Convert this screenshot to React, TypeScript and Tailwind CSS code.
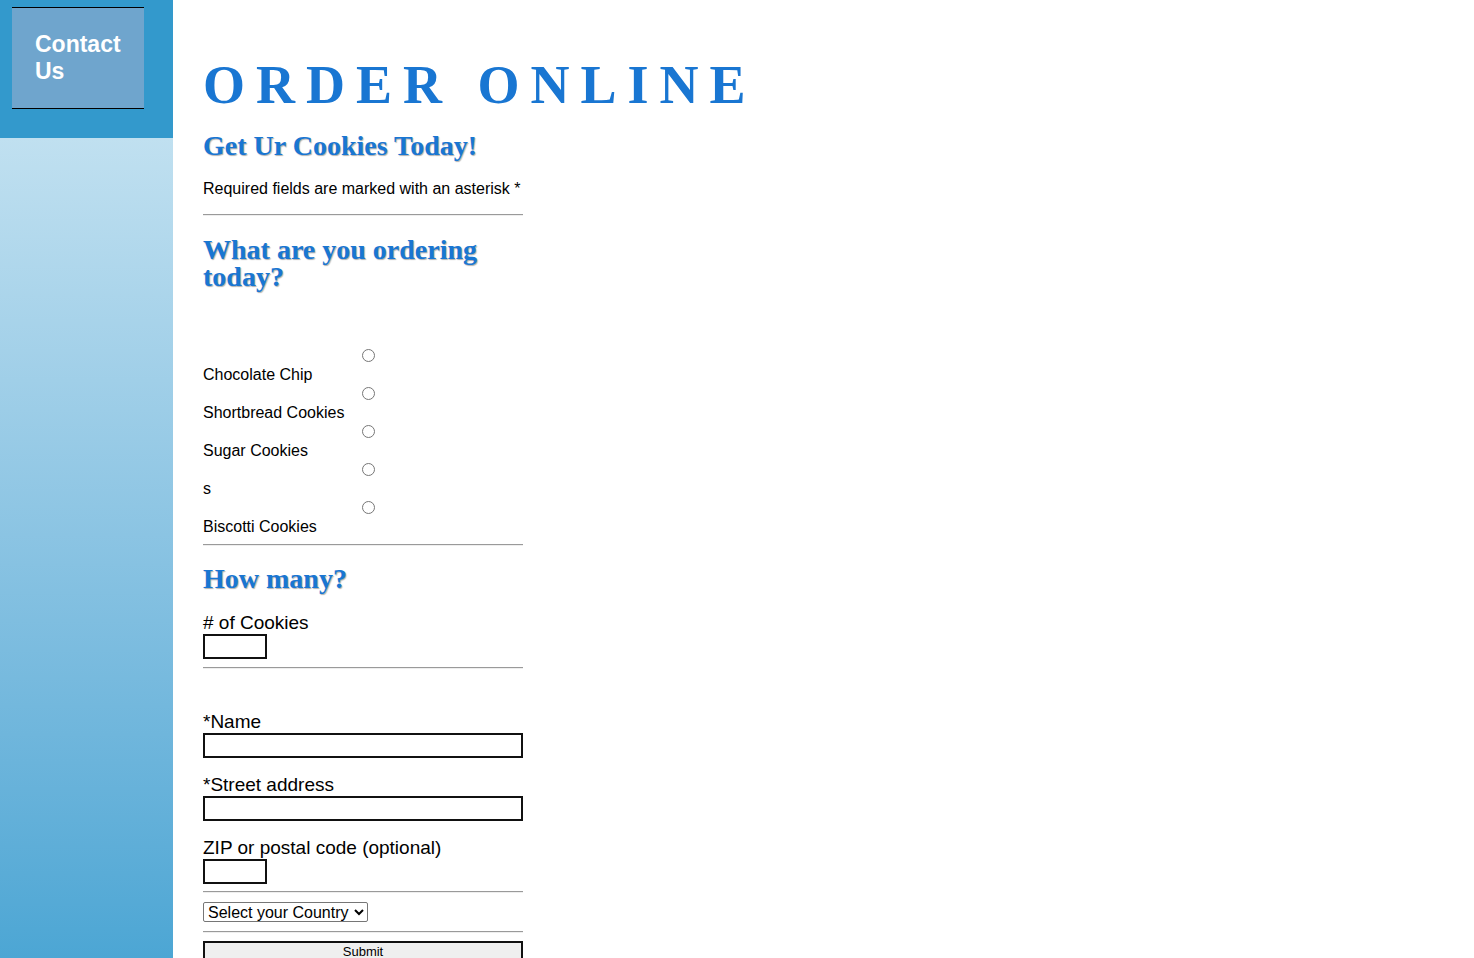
import React from "react";

const cookies = ["Chocolate Chip", "Shortbread Cookies", "Sugar Cookies", "s", "Biscotti Cookies"];

function Rule({ className = "" }: { className?: string }) {
    return <div className={"w-[320px] h-0 border-t border-t-[#9a9a9a] border-b border-b-[#eeeeee] " + className}></div>;
}

function Field({ label, wide, top }: { label: string; wide?: boolean; top: string }) {
    return (
        <div className={top}>
            <div className="text-[19px] leading-[22px] h-[22px] pt-[1px]">{label}</div>
            <input type="text" className={"block mt-[1px] h-[25px] border-2 border-[#111] bg-white " + (wide ? "w-[320px]" : "w-[64px]")} />
        </div>
    );
}

export default function App() {
    return (
        <div className="flex h-screen overflow-hidden bg-white font-['Liberation_Sans',Arial,sans-serif] text-black">
            {/* sidebar */}
            <div className="w-[173px] shrink-0 flex flex-col">
                <div className="h-[138px] bg-[#3399cc] pt-[7px] pl-[12px]">
                    <div className="w-[132px] h-[102px] bg-[#6fa5cd] border-t border-b border-black pt-[23px] pl-[23px]">
                        <a href="#" className="block text-white font-bold text-[23px] leading-[27px]">Contact<br />Us</a>
                    </div>
                </div>
                <div className="flex-1 bg-gradient-to-b from-[#c0e0f0] to-[#4ca6d4]"></div>
            </div>

            {/* main */}
            <div className="pl-[30px]">
                <h1 className="mt-[58px] h-[54px] leading-[54px] text-[54px] font-bold tracking-[11px] text-[#1976d2] font-['Liberation_Serif',Georgia,serif] whitespace-nowrap">ORDER ONLINE</h1>
                <h2 className="mt-[19px] leading-[30px] text-[28px] font-bold text-[#1976d2] font-['Liberation_Serif',Georgia,serif] [text-shadow:1px_1px_1px_#b0b0b0]">Get Ur Cookies Today!</h2>
                <p className="mt-[19px] text-[16px] leading-[18px]">Required fields are marked with an asterisk *</p>
                <Rule className="mt-[16px]" />
                <h2 className="mt-[20px] w-[320px] leading-[27px] text-[28px] font-bold text-[#1976d2] font-['Liberation_Serif',Georgia,serif] [text-shadow:1px_1px_1px_#b0b0b0]">What are you ordering today?</h2>

                <div className="mt-[56px]">
                    {cookies.map((c) => (
                        <div key={c} className="h-[38px]">
                            <div className="h-[20px]">
                                <input type="radio" name="cookie" className="block m-0 ml-[159px] relative top-[3px] w-[13px] h-[13px]" />
                            </div>
                            <label className="block text-[16px] leading-[18px] h-[18px]">{c}</label>
                        </div>
                    ))}
                </div>
                <Rule className="mt-[8px]" />

                <h2 className="mt-[19px] leading-[27px] text-[28px] font-bold text-[#1976d2] font-['Liberation_Serif',Georgia,serif] [text-shadow:1px_1px_1px_#b0b0b0]">How many?</h2>
                <Field label="# of Cookies" top="mt-[19px]" />
                <Rule className="mt-[8px]" />

                <Field label="*Name" wide top="mt-[41px]" />
                <Field label="*Street address" wide top="mt-[15px]" />
                <Field label="ZIP or postal code (optional)" top="mt-[15px]" />
                <Rule className="mt-[7px]" />

                <select className="block mt-[9px] h-[20px] w-[165px] text-[16px] leading-[18px] border border-[#767676] rounded-[2px] bg-white">
                    <option>Select your Country</option>
                </select>
                <Rule className="mt-[9px]" />

                <button className="block mt-[8px] w-[320px] h-[21px] bg-[#efefef] border-2 border-[#111] text-[13px] leading-[17px]">Submit</button>
            </div>
        </div>
    );
}
